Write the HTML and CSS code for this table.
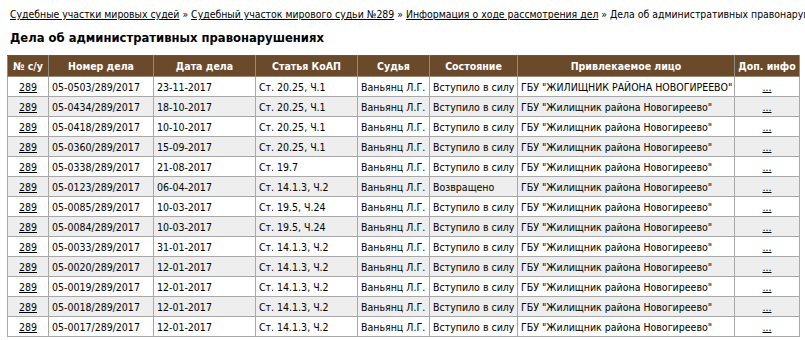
FILE: index.html
```html
<!DOCTYPE html>
<html lang="ru">
<head>
<meta charset="utf-8">
<title>Дела об административных правонарушениях</title>
<link rel="stylesheet" href="styles.css">
</head>
<body>
<div class="crumbs"><a href="#">Судебные участки мировых судей</a> » <a href="#">Судебный участок мирового судьи №289</a> » <a href="#">Информация о ходе рассмотрения дел</a> » Дела об административных правонарушениях</div>
<h1 class="title">Дела об административных правонарушениях</h1>
<table class="cases">
<colgroup>
<col class="c1"><col class="c2"><col class="c3"><col class="c4"><col class="c5"><col class="c6"><col class="c7"><col class="c8">
</colgroup>
<thead>
<tr><th>№ с/у</th><th>Номер дела</th><th>Дата дела</th><th>Статья КоАП</th><th>Судья</th><th>Состояние</th><th>Привлекаемое лицо</th><th>Доп. инфо</th></tr>
</thead>
<tbody>
<tr><td class="ctr"><a href="#">289</a></td><td>05-0503/289/2017</td><td>23-11-2017</td><td>Ст. 20.25, Ч.1</td><td>Ваньянц Л.Г.</td><td>Вступило в силу</td><td>ГБУ "ЖИЛИЩНИК РАЙОНА НОВОГИРЕЕВО"</td><td class="ctr"><a href="#">...</a></td></tr>
<tr><td class="ctr"><a href="#">289</a></td><td>05-0434/289/2017</td><td>18-10-2017</td><td>Ст. 20.25, Ч.1</td><td>Ваньянц Л.Г.</td><td>Вступило в силу</td><td>ГБУ "Жилищник района Новогиреево"</td><td class="ctr"><a href="#">...</a></td></tr>
<tr><td class="ctr"><a href="#">289</a></td><td>05-0418/289/2017</td><td>10-10-2017</td><td>Ст. 20.25, Ч.1</td><td>Ваньянц Л.Г.</td><td>Вступило в силу</td><td>ГБУ "Жилищник района Новогиреево"</td><td class="ctr"><a href="#">...</a></td></tr>
<tr><td class="ctr"><a href="#">289</a></td><td>05-0360/289/2017</td><td>15-09-2017</td><td>Ст. 20.25, Ч.1</td><td>Ваньянц Л.Г.</td><td>Вступило в силу</td><td>ГБУ "Жилищник района Новогиреево"</td><td class="ctr"><a href="#">...</a></td></tr>
<tr><td class="ctr"><a href="#">289</a></td><td>05-0338/289/2017</td><td>21-08-2017</td><td>Ст. 19.7</td><td>Ваньянц Л.Г.</td><td>Вступило в силу</td><td>ГБУ "Жилищник района Новогиреево"</td><td class="ctr"><a href="#">...</a></td></tr>
<tr><td class="ctr"><a href="#">289</a></td><td>05-0123/289/2017</td><td>06-04-2017</td><td>Ст. 14.1.3, Ч.2</td><td>Ваньянц Л.Г.</td><td>Возвращено</td><td>ГБУ "Жилищник района Новогиреево"</td><td class="ctr"><a href="#">...</a></td></tr>
<tr><td class="ctr"><a href="#">289</a></td><td>05-0085/289/2017</td><td>10-03-2017</td><td>Ст. 19.5, Ч.24</td><td>Ваньянц Л.Г.</td><td>Вступило в силу</td><td>ГБУ "Жилищник района Новогиреево"</td><td class="ctr"><a href="#">...</a></td></tr>
<tr><td class="ctr"><a href="#">289</a></td><td>05-0084/289/2017</td><td>10-03-2017</td><td>Ст. 19.5, Ч.24</td><td>Ваньянц Л.Г.</td><td>Вступило в силу</td><td>ГБУ "Жилищник района Новогиреево"</td><td class="ctr"><a href="#">...</a></td></tr>
<tr><td class="ctr"><a href="#">289</a></td><td>05-0033/289/2017</td><td>31-01-2017</td><td>Ст. 14.1.3, Ч.2</td><td>Ваньянц Л.Г.</td><td>Вступило в силу</td><td>ГБУ "Жилищник района Новогиреево"</td><td class="ctr"><a href="#">...</a></td></tr>
<tr><td class="ctr"><a href="#">289</a></td><td>05-0020/289/2017</td><td>12-01-2017</td><td>Ст. 14.1.3, Ч.2</td><td>Ваньянц Л.Г.</td><td>Вступило в силу</td><td>ГБУ "Жилищник района Новогиреево"</td><td class="ctr"><a href="#">...</a></td></tr>
<tr><td class="ctr"><a href="#">289</a></td><td>05-0019/289/2017</td><td>12-01-2017</td><td>Ст. 14.1.3, Ч.2</td><td>Ваньянц Л.Г.</td><td>Вступило в силу</td><td>ГБУ "Жилищник района Новогиреево"</td><td class="ctr"><a href="#">...</a></td></tr>
<tr><td class="ctr"><a href="#">289</a></td><td>05-0018/289/2017</td><td>12-01-2017</td><td>Ст. 14.1.3, Ч.2</td><td>Ваньянц Л.Г.</td><td>Вступило в силу</td><td>ГБУ "Жилищник района Новогиреево"</td><td class="ctr"><a href="#">...</a></td></tr>
<tr><td class="ctr"><a href="#">289</a></td><td>05-0017/289/2017</td><td>12-01-2017</td><td>Ст. 14.1.3, Ч.2</td><td>Ваньянц Л.Г.</td><td>Вступило в силу</td><td>ГБУ "Жилищник района Новогиреево"</td><td class="ctr"><a href="#">...</a></td></tr>
</tbody>
</table>
</body>
</html>
```
FILE: styles.css
```css
html, body {
  margin: 0;
  padding: 0;
  background: #ffffff;
  overflow: hidden;
}
body {
  font-family: "DejaVu Sans Condensed", "Liberation Sans", sans-serif;
  color: #000000;
  font-size: 10.5px;
}
a {
  color: #000000;
  text-decoration: underline;
}
.crumbs {
  padding: 6px 10px 0;
  font-size: 10.4px;
  line-height: 16px;
  white-space: nowrap;
}
.title {
  margin: 8px 10px 9px;
  font-size: 12.9px;
  line-height: 16px;
  font-weight: bold;
}
.cases {
  margin-left: 7px;
  width: 792px;
  table-layout: fixed;
  border-collapse: collapse;
  border: 1px solid #5a5a5a;
}
.c1 { width: 41px; }
.c2 { width: 105px; }
.c3 { width: 102px; }
.c4 { width: 102px; }
.c5 { width: 72px; }
.c6 { width: 88px; }
.c7 { width: 217px; }
.c8 { width: 65px; }
.cases th {
  background: #6b4a2c;
  color: #ffffff;
  font-weight: bold;
  text-align: center;
  height: 20px;
  padding: 0 2px;
  border: 1px solid #9a8a78;
  border-top-color: #5a5a5a;
  white-space: nowrap;
  overflow: hidden;
}
.cases td {
  height: 19px;
  padding: 0 3px;
  border: 1px solid #a8a8a8;
  white-space: nowrap;
  overflow: hidden;
}
.cases tbody tr:nth-child(even) td {
  background: #eeeeee;
}
.cases td.ctr {
  text-align: center;
}
```
